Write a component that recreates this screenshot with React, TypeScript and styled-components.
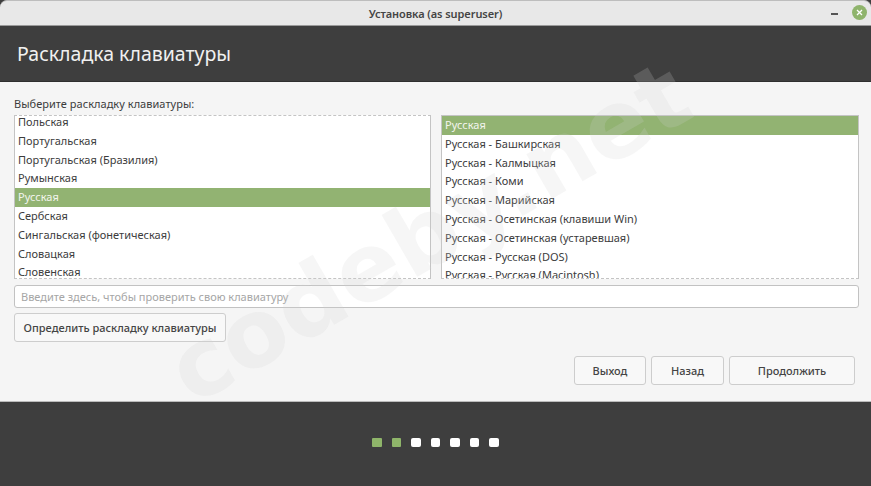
import styled, { createGlobalStyle } from "styled-components";

const GlobalStyle = createGlobalStyle`
  html, body {
    margin: 0;
    padding: 0;
    background: #3e3e3e;
    overflow: hidden;
  }
`;

const Window = styled.div`
  position: relative;
  width: 871px;
  height: 486px;
  display: flex;
  flex-direction: column;
  overflow: hidden;
  font-family: "Noto Sans", sans-serif;
  font-size: 11px;
  color: #3c3c3c;
`;

const TitleBar = styled.header`
  flex: 0 0 26px;
  box-sizing: border-box;
  display: flex;
  align-items: center;
  justify-content: center;
  position: relative;
  background: #e8e8e8;
  border-top: 1px solid #bdbdbd;
  border-bottom: 1px solid #9a9a9a;
  border-radius: 7px 7px 0 0;
  font-weight: 600;
  letter-spacing: -0.08px;
  color: #444;
`;

const WindowControls = styled.div`
  position: absolute;
  right: 4px;
  top: 4px;
  display: flex;
  align-items: center;
  gap: 14px;
`;

const MinimizeIcon = styled.span`
  width: 7px;
  height: 2px;
  margin-top: 2px;
  background: #555;
`;

const CloseButton = styled.span`
  width: 15px;
  height: 15px;
  border-radius: 50%;
  background: #8fb46c;
  display: flex;
  align-items: center;
  justify-content: center;
`;

const PageHeader = styled.div`
  flex: 0 0 56px;
  box-sizing: border-box;
  display: flex;
  align-items: center;
  padding: 0 0 1px 17px;
  background: #3e3e3e;
  border-bottom: 1px solid #2f2f2f;
  color: #f0f0f0;
  font-size: 19.5px;
`;

const Content = styled.main`
  flex: 1;
  box-sizing: border-box;
  display: flex;
  flex-direction: column;
  padding: 14px 16px 16px 14px;
  background: #f5f5f5;
`;

const Prompt = styled.div`
  height: 19px;
  line-height: 15px;
  letter-spacing: 0.03px;
`;

const Lists = styled.div`
  display: flex;
  gap: 10px;
  margin-right: -4px;
`;

const List = styled.div<{ $width: number; $dashedTop?: boolean }>`
  flex: 0 0 ${({ $width }) => $width}px;
  box-sizing: border-box;
  height: 164px;
  overflow: hidden;
  background: #fff;
  border: 1px solid #c4c4c4;
  border-top-style: ${({ $dashedTop }) => ($dashedTop ? "dashed" : "solid")};
  border-bottom-style: dashed;
`;

const Rows = styled.div<{ $scrolled?: number }>`
  margin-top: ${({ $scrolled }) => -($scrolled ?? 0)}px;
`;

const Row = styled.div<{ $selected?: boolean }>`
  height: 18.8px;
  line-height: 18.8px;
  padding-left: 3px;
  white-space: nowrap;
  background: ${({ $selected }) => ($selected ? "#92b372" : "transparent")};
  color: ${({ $selected }) => ($selected ? "#f2f5ee" : "#3c3c3c")};
`;

const TestEntry = styled.input`
  box-sizing: border-box;
  height: 23px;
  margin: 6px -4px 0 0;
  padding: 0 6px;
  border: 1px solid #c2c2c2;
  border-radius: 3px;
  background: #fff;
  font: inherit;
  outline: none;

  &::placeholder {
    color: #a6a6a6;
    opacity: 1;
  }
`;

const Button = styled.button<{ $width: number }>`
  box-sizing: border-box;
  width: ${({ $width }) => $width}px;
  height: 29px;
  padding: 0;
  border: 1px solid #cdcdcd;
  border-radius: 3px;
  background: #f8f8f8;
  font: inherit;
  font-weight: 500;
  color: #444;
`;

const DetectButton = styled(Button)`
  margin-top: 5px;
`;

const Actions = styled.div`
  margin-top: auto;
  display: flex;
  justify-content: flex-end;
  gap: 5px;
`;

const Footer = styled.footer`
  flex: 0 0 85px;
  box-sizing: border-box;
  display: flex;
  align-items: center;
  justify-content: center;
  gap: 10px;
  padding-bottom: 3px;
  background: #3e3e3e;
  border-top: 1px solid #bbb;
`;

const Step = styled.span<{ $done: boolean }>`
  width: 9.5px;
  height: 9.5px;
  border-radius: ${({ $done }) => ($done ? "1px" : "2px")};
  background: ${({ $done }) => ($done ? "#8fb56a" : "#fff")};
`;

const Watermark = styled.div`
  position: absolute;
  left: 429px;
  top: 233px;
  transform: translate(-50%, -50%) rotate(-30deg);
  font-family: "DejaVu Sans", sans-serif;
  font-weight: 700;
  font-size: 94px;
  line-height: 1;
  white-space: nowrap;
  color: rgba(212, 212, 212, 0.2);
  pointer-events: none;
`;

const layouts = [
  "Польская",
  "Португальская",
  "Португальская (Бразилия)",
  "Румынская",
  "Русская",
  "Сербская",
  "Сингальская (фонетическая)",
  "Словацкая",
  "Словенская",
];

const variants = [
  "Русская",
  "Русская - Башкирская",
  "Русская - Калмыцкая",
  "Русская - Коми",
  "Русская - Марийская",
  "Русская - Осетинская (клавиши Win)",
  "Русская - Осетинская (устаревшая)",
  "Русская - Русская (DOS)",
  "Русская - Русская (Macintosh)",
];

const steps = [true, true, false, false, false, false, false];

const App = () => (
  <>
    <GlobalStyle />
    <Window>
      <TitleBar>
        Установка (as superuser)
        <WindowControls>
          <MinimizeIcon />
          <CloseButton>
            <svg width="7" height="7" viewBox="0 0 7 7">
              <path d="M1 1l5 5M6 1l-5 5" stroke="#fff" strokeWidth="1.3" />
            </svg>
          </CloseButton>
        </WindowControls>
      </TitleBar>
      <PageHeader>Раскладка клавиатуры</PageHeader>
      <Content>
        <Prompt>Выберите раскладку клавиатуры:</Prompt>
        <Lists>
          <List $width={417} $dashedTop>
            <Rows $scrolled={3}>
              {layouts.map((name) => (
                <Row key={name} $selected={name === "Русская"}>
                  {name}
                </Row>
              ))}
            </Rows>
          </List>
          <List $width={418}>
            <Rows>
              {variants.map((name) => (
                <Row key={name} $selected={name === "Русская"}>
                  {name}
                </Row>
              ))}
            </Rows>
          </List>
        </Lists>
        <TestEntry placeholder="Введите здесь, чтобы проверить свою клавиатуру" />
        <DetectButton $width={212}>Определить раскладку клавиатуры</DetectButton>
        <Actions>
          <Button $width={72}>Выход</Button>
          <Button $width={73}>Назад</Button>
          <Button $width={126}>Продолжить</Button>
        </Actions>
      </Content>
      <Footer>
        {steps.map((done, index) => (
          <Step key={index} $done={done} />
        ))}
      </Footer>
      <Watermark>codeby.net</Watermark>
    </Window>
  </>
);

export default App;
